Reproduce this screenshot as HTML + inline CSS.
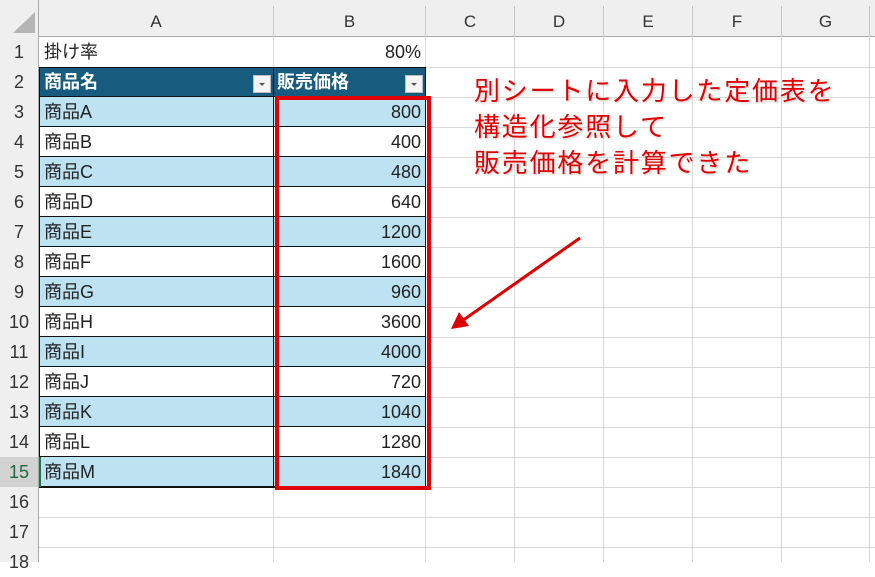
<!DOCTYPE html>
<html><head><meta charset="utf-8"><style>
*{margin:0;padding:0;box-sizing:border-box}
body{width:875px;height:562px;overflow:hidden;background:#fff;position:relative;font-family:"Liberation Sans","Noto Sans CJK JP",sans-serif;color:#222}
.a{position:absolute}
.hd{background:#efefef}
.vl{position:absolute;top:37px;bottom:0;width:1px;background:#d9d9d9}
.hl{position:absolute;left:39px;right:0;height:1px;background:#d9d9d9}
.rn{position:absolute;left:0;width:38px;height:30px;text-align:center;font-size:18px;line-height:30px;color:#333}
.ch{position:absolute;top:6px;height:31px;text-align:center;font-size:17px;line-height:31px;color:#333;border-right:1px solid #c8c8c8}
.cell{position:absolute;height:30px;font-size:18px;line-height:30px;white-space:nowrap}
.ca{left:39px;width:235px;padding-left:5px}
.cb{left:274px;width:152px;text-align:right;padding-right:5px}
.ann{position:absolute;left:474px;font-size:26px;color:#e10000;letter-spacing:1.8px;line-height:36px;text-shadow:0 0 2px #fff,1px 1px 2px #bbb}
</style></head><body>
<div class="a hd" style="left:0;top:0;width:875px;height:37px;border-bottom:1px solid #a9a9a9"></div>
<div class="a hd" style="left:0;top:0;width:39px;height:562px;border-right:1px solid #a9a9a9"></div>
<svg class="a" style="left:10px;top:10px" width="26" height="24"><polygon points="25,2 25,23 3,23" fill="#b4b4b4"/></svg>
<div class="ch" style="left:39px;width:235px">A</div>
<div class="ch" style="left:274px;width:152px">B</div>
<div class="ch" style="left:426px;width:89px">C</div>
<div class="ch" style="left:515px;width:89px">D</div>
<div class="ch" style="left:604px;width:89px">E</div>
<div class="ch" style="left:693px;width:89px">F</div>
<div class="ch" style="left:782px;width:88px">G</div>
<div class="vl" style="left:273px"></div><div class="vl" style="left:425px"></div><div class="vl" style="left:514px"></div><div class="vl" style="left:603px"></div><div class="vl" style="left:692px"></div><div class="vl" style="left:781px"></div><div class="vl" style="left:869px"></div>
<div class="hl" style="top:67px"></div><div class="hl" style="top:97px"></div><div class="hl" style="top:127px"></div><div class="hl" style="top:157px"></div><div class="hl" style="top:187px"></div><div class="hl" style="top:217px"></div><div class="hl" style="top:247px"></div><div class="hl" style="top:277px"></div><div class="hl" style="top:307px"></div><div class="hl" style="top:337px"></div><div class="hl" style="top:367px"></div><div class="hl" style="top:397px"></div><div class="hl" style="top:427px"></div><div class="hl" style="top:457px"></div><div class="hl" style="top:487px"></div><div class="hl" style="top:517px"></div><div class="hl" style="top:547px"></div>
<div class="rn" style="top:37px">1</div><div class="rn" style="top:67px">2</div><div class="rn" style="top:97px">3</div><div class="rn" style="top:127px">4</div><div class="rn" style="top:157px">5</div><div class="rn" style="top:187px">6</div><div class="rn" style="top:217px">7</div><div class="rn" style="top:247px">8</div><div class="rn" style="top:277px">9</div><div class="rn" style="top:307px">10</div><div class="rn" style="top:337px">11</div><div class="rn" style="top:367px">12</div><div class="rn" style="top:397px">13</div><div class="rn" style="top:427px">14</div><div class="rn" style="top:457px;background:#d2d2d2;color:#1e6b3a">15</div><div class="rn" style="top:487px">16</div><div class="rn" style="top:517px">17</div><div class="rn" style="top:547px">18</div>
<div class="cell ca" style="top:37px">掛け率</div><div class="cell cb" style="top:37px">80%</div>
<div class="a" style="left:39px;top:67px;width:387px;height:30px;background:#175c7e;border:1px solid #111"></div>
<div class="cell ca" style="top:67px;color:#fff;font-weight:bold">商品名</div>
<div class="cell" style="top:67px;left:275px;color:#fff;font-weight:bold;padding-left:2px">販売価格</div>
<div class="a" style="left:273px;top:67px;width:1px;height:30px;background:#111"></div>
<div class="a" style="left:253px;top:75px;width:18px;height:18px;background:#f4f4f4;border:1px solid #bbb"><svg width="16" height="16"><polygon points="5,7 11,7 8,10" fill="#555"/></svg></div>
<div class="a" style="left:405px;top:75px;width:18px;height:18px;background:#f4f4f4;border:1px solid #bbb"><svg width="16" height="16"><polygon points="5,7 11,7 8,10" fill="#555"/></svg></div>
<div class="a" style="left:39px;top:97px;width:387px;height:391px;border:1px solid #111;border-top:none;background:repeating-linear-gradient(#bde3f3 0 29px,#111 29px 30px,#fff 30px 59px,#111 59px 60px)"></div>
<div class="a" style="left:273px;top:97px;width:1px;height:391px;background:#111"></div>
<div class="a" style="left:39px;top:457px;width:2px;height:30px;background:#217346"></div>
<div class="cell ca" style="top:97px">商品A</div><div class="cell cb" style="top:97px">800</div>
<div class="cell ca" style="top:127px">商品B</div><div class="cell cb" style="top:127px">400</div>
<div class="cell ca" style="top:157px">商品C</div><div class="cell cb" style="top:157px">480</div>
<div class="cell ca" style="top:187px">商品D</div><div class="cell cb" style="top:187px">640</div>
<div class="cell ca" style="top:217px">商品E</div><div class="cell cb" style="top:217px">1200</div>
<div class="cell ca" style="top:247px">商品F</div><div class="cell cb" style="top:247px">1600</div>
<div class="cell ca" style="top:277px">商品G</div><div class="cell cb" style="top:277px">960</div>
<div class="cell ca" style="top:307px">商品H</div><div class="cell cb" style="top:307px">3600</div>
<div class="cell ca" style="top:337px">商品I</div><div class="cell cb" style="top:337px">4000</div>
<div class="cell ca" style="top:367px">商品J</div><div class="cell cb" style="top:367px">720</div>
<div class="cell ca" style="top:397px">商品K</div><div class="cell cb" style="top:397px">1040</div>
<div class="cell ca" style="top:427px">商品L</div><div class="cell cb" style="top:427px">1280</div>
<div class="cell ca" style="top:457px">商品M</div><div class="cell cb" style="top:457px">1840</div>
<div class="a" style="left:275px;top:96px;width:156px;height:394px;border:4px solid #e00000"></div>
<div class="ann" style="top:73px">別シートに入力した定価表を</div>
<div class="ann" style="top:109px">構造化参照して</div>
<div class="ann" style="top:145px">販売価格を計算できた</div>
<svg class="a" style="left:0;top:0" width="875" height="562"><line x1="580" y1="238" x2="462" y2="321" stroke="#dd0000" stroke-width="3"/><polygon points="451,329 459,312 469,326" fill="#dd0000"/></svg>
</body></html>
